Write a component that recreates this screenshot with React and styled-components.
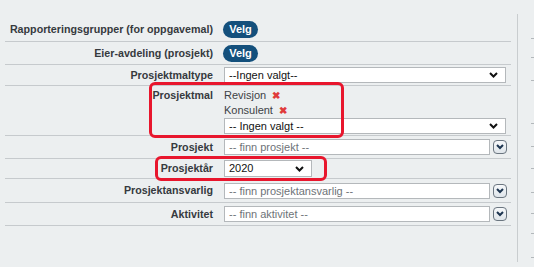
import React from "react";
import styled, { createGlobalStyle } from "styled-components";

const Global = createGlobalStyle`
  html, body { margin: 0; padding: 0; background: #eceff0; }
  body { font-family: "Liberation Sans", Arial, sans-serif; }
`;

const Page = styled.div`
  display: flex;
  height: 267px;
  width: 534px;
  overflow: hidden;
  background: #eceff0;
`;

const Panel = styled.div`
  position: relative;
  width: 506px;
  margin-left: 5px;
  padding-top: 17px;
  box-sizing: border-box;
`;

const Divider = styled.div`
  width: 1px;
  margin-left: 6px;
  margin-top: 14px;
  height: 248px;
  background: #c9cdcf;
`;

const Strip = styled.div`
  flex: 1;
  display: flex;
  flex-direction: column;
  align-items: flex-end;
`;

const Tick = styled.div`
  width: 3px;
  height: 1px;
  background: #b3b8bb;
  margin-top: ${(p) => p.$gap}px;
`;

const Row = styled.div`
  display: grid;
  grid-template-columns: 208px 1fr;
  column-gap: 11px;
  align-items: ${(p) => (p.$top ? "start" : "center")};
  height: ${(p) => p.$h}px;
  box-sizing: content-box;
  padding-top: ${(p) => p.$pt || 0}px;
  border-bottom: 1px solid #c6cacd;
`;

const Label = styled.div`
  text-align: right;
  font-weight: bold;
  font-size: 10.7px;
  line-height: 15px;
  color: #363a3e;
  white-space: nowrap;
`;

const Cell = styled.div`
  display: flex;
  flex-direction: ${(p) => (p.$col ? "column" : "row")};
  align-items: ${(p) => (p.$col ? "flex-start" : "center")};
  gap: ${(p) => p.$gap || 0}px;
`;

const VelgButton = styled.button`
  width: 35px;
  height: 17px;
  margin-left: -1px;
  border: none;
  border-radius: 9px;
  background: #14507c;
  color: #fff;
  font-family: "Liberation Sans", Arial, sans-serif;
  font-weight: bold;
  font-size: 11px;
  padding: 0;
  line-height: 17px;
`;

const SelectBox = styled.div`
  position: relative;
  width: ${(p) => p.$w}px;
  height: ${(p) => p.$hh || 16}px;
  box-sizing: border-box;
  background: #fff;
  border: 1px solid #b4b8bb;
  font-size: 11px;
  color: #111;
  line-height: ${(p) => (p.$hh || 16) - 2}px;
  padding-left: 4px;
  display: flex;
  align-items: center;
  justify-content: space-between;
  padding-right: 7px;
`;

const Chevron = () => (
  <svg width="9" height="6" viewBox="0 0 9 6">
    <polyline points="1,1 4.5,4.5 8,1" fill="none" stroke="#111" strokeWidth="2" />
  </svg>
);

const TextInput = styled.div`
  width: 266px;
  height: 16px;
  box-sizing: border-box;
  background: #fff;
  border: 1px solid #b4b8bb;
  font-size: 11px;
  line-height: 14px;
  color: #6e7378;
  padding-left: 4px;
`;

const RoundButton = styled.div`
  width: 14px;
  height: 14px;
  box-sizing: border-box;
  border: 1px solid #6b7680;
  border-radius: 4px;
  background: linear-gradient(#f6f8fa, #dfe5ea);
  display: flex;
  align-items: center;
  justify-content: center;
`;

const SmallChevron = () => (
  <svg width="8" height="6" viewBox="0 0 8 6">
    <polyline points="1,1 4,4 7,1" fill="none" stroke="#1d3550" strokeWidth="2" />
  </svg>
);

const Tag = styled.div`
  display: flex;
  align-items: center;
  gap: 6px;
  font-size: 11px;
  line-height: 15px;
  color: #3d4246;
`;

const Remove = styled.span`
  color: #e03b3b;
  font-size: 10px;
  font-weight: bold;
  line-height: 15px;
`;

const Highlight = styled.div`
  position: absolute;
  left: ${(p) => p.$x}px;
  top: ${(p) => p.$y}px;
  width: ${(p) => p.$w}px;
  height: ${(p) => p.$h}px;
  box-sizing: border-box;
  border: 3px solid #e8162d;
  border-radius: 6px;
  pointer-events: none;
`;

const Lookup = ({ text }) => (
  <Cell $gap={3}>
    <TextInput>{text}</TextInput>
    <RoundButton>
      <SmallChevron />
    </RoundButton>
  </Cell>
);

const ticks = [38, 19, 23, 43, 23, 22, 24, 21, 20, 24];

export default function App() {
  return (
    <>
      <Global />
      <Page>
        <Panel>
          <Row $h={24}>
            <Label>Rapporteringsgrupper (for oppgavemal)</Label>
            <Cell>
              <VelgButton>Velg</VelgButton>
            </Cell>
          </Row>
          <Row $h={22}>
            <Label>Eier-avdeling (prosjekt)</Label>
            <Cell>
              <VelgButton>Velg</VelgButton>
            </Cell>
          </Row>
          <Row $h={20}>
            <Label>Prosjektmaltype</Label>
            <Cell>
              <SelectBox $w={282}>
                <span>--Ingen valgt--</span>
                <Chevron />
              </SelectBox>
            </Cell>
          </Row>
          <Row $h={47} $pt={2} $top>
            <Label>Prosjektmal</Label>
            <Cell $col>
              <Tag>
                Revisjon <Remove>✖</Remove>
              </Tag>
              <Tag>
                Konsulent <Remove>✖</Remove>
              </Tag>
              <SelectBox $w={282}>
                <span>-- Ingen valgt --</span>
                <Chevron />
              </SelectBox>
            </Cell>
          </Row>
          <Row $h={22}>
            <Label>Prosjekt</Label>
            <Lookup text="-- finn prosjekt --" />
          </Row>
          <Row $h={19}>
            <Label>Prosjektår</Label>
            <Cell>
              <SelectBox $w={88} $hh={17}>
                <span>2020</span>
                <Chevron />
              </SelectBox>
            </Cell>
          </Row>
          <Row $h={23}>
            <Label>Prosjektansvarlig</Label>
            <Lookup text="-- finn prosjektansvarlig --" />
          </Row>
          <Row $h={22}>
            <Label>Aktivitet</Label>
            <Lookup text="-- finn aktivitet --" />
          </Row>
          <Highlight $x={144} $y={82} $w={195} $h={56} />
          <Highlight $x={150} $y={156} $w={172} $h={25} />
        </Panel>
        <Divider />
        <Strip>
          {ticks.map((g, i) => (
            <Tick key={i} $gap={i === 0 ? g : g - 1} />
          ))}
        </Strip>
      </Page>
    </>
  );
}
